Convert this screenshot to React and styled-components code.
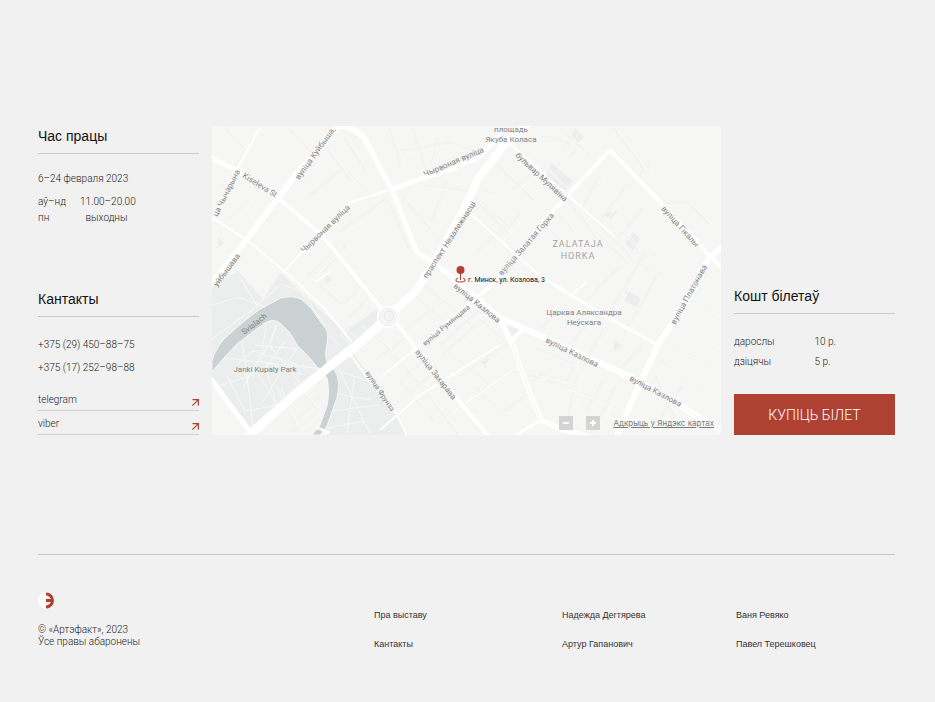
import React from "react";
import styled, { createGlobalStyle } from "styled-components";

const Global = createGlobalStyle`
  * { box-sizing: border-box; }
  body { margin: 0; background: #f1f1f1; font-family: Roboto, "Noto Sans", sans-serif; font-size: 10px; font-weight: 300; color: #222; }
`;

const grotesk = '"Liberation Sans", Arial, sans-serif';
const red = "#ae4132";

const Page = styled.div`
  padding: 126px 40px 48px 38px;
`;
const Main = styled.main`
  display: grid;
  grid-template-columns: 161px minmax(0, 1fr) 161px;
  gap: 13px;
`;
const Column = styled.div`
  display: flex;
  flex-direction: column;
  justify-content: ${(p) => p.$justify};
`;
const Section = styled.section`
  display: flex;
  flex-direction: column;
  line-height: 16px;
`;
const Heading = styled.h2`
  margin: 0 0 17px;
  padding-bottom: 7px;
  border-bottom: 1px solid #c9c9c9;
  font: 400 14px/20px ${grotesk};
  color: #111;
`;
const Facts = styled.dl`
  display: grid;
  grid-template-columns: ${(p) => p.$columns};
  row-gap: ${(p) => p.$gap};
  margin: ${(p) => p.$margin};
`;
const Term = styled.dt``;
const Value = styled.dd`
  margin: 0;
  text-align: ${(p) => p.$align || "left"};
  white-space: nowrap;
`;
const Phones = styled.div`
  display: flex;
  flex-direction: column;
  gap: 7px;
  margin: 3px 0 11px;
`;
const Plain = styled.a`
  color: inherit;
  text-decoration: none;
`;
const Messenger = styled(Plain)`
  display: flex;
  justify-content: space-between;
  padding: 5px 0 2px;
  border-bottom: 1px solid #d0d0d0;
`;
const Arrow = styled.svg`
  width: 7px;
  height: 7px;
  margin-top: 7px;
`;
const Buy = styled.button`
  height: 41px;
  border: 0;
  padding: 0;
  background: ${red};
  color: #fff;
  font: 300 14px/20px Roboto, sans-serif;
  cursor: pointer;
`;
const MapFrame = styled.section`
  position: relative;
  overflow: hidden;
  background: #f6f6f5;
`;
const Drawing = styled.svg`
  display: block;
  width: 100%;
`;
const Controls = styled.div`
  position: absolute;
  right: 7px;
  bottom: 5px;
  display: flex;
  align-items: center;
`;
const Zoom = styled.button`
  display: grid;
  place-items: center;
  width: 14px;
  height: 14px;
  margin-right: 13px;
  padding: 0;
  border: 0;
  background: #d4d4d4;
`;
const MapLink = styled.a`
  font: 400 8px/14px Inter, sans-serif;
  color: #7c7c7c;
`;
const Footer = styled.footer`
  display: grid;
  grid-template-columns: 336fr 188fr 174fr 159fr;
  margin-top: 119px;
  padding-top: 37px;
  border-top: 1px solid #c6c6c6;
  line-height: 12px;
`;
const Logo = styled.svg`
  display: block;
  width: 17px;
  height: 17px;
  margin-bottom: 15px;
`;
const Links = styled.nav`
  display: flex;
  flex-direction: column;
  align-items: flex-start;
  gap: 17px;
  padding-top: 17px;
  font: 400 9px/12px ${grotesk};
  color: #333;
`;

const river =
  "M212 372 L212 360 Q217 346 225 338 L243 322 L260 309 L281 298 Q292 295 301 299 L311 308 Q319 320 326 329 Q329 334 327 345 Q324 357 328 365 Q336 370 338 378 Q340 387 337 398 Q333 408 330 418 L326 428 L320 435 L312 435 L320 425 L327 406 Q330 390 327 378 L319 369 L307 355 L297 345 L290 333 L280 323 Q273 318 265 323 L250 334 L237 344 L223 359 Z";

const roads = [
  ["M205 292 L237 252 L278 198 L297 173 L340 124", 6],
  ["M205 155 L240 172 L278 198", 5],
  ["M278 198 L322 235 L360 282 L388 317", 4],
  ["M335 125 L350 127 L363 136 L376 161 L392 191 L416 252 L450 275", 6],
  ["M392 189 L423 178 L450 170 L478 158 L502 134", 5],
  ["M392 189 L352 202 L320 232 L284 272", 2],
  ["M530 122 L504 145 L478 179 L462 213 L438 256 L416 291 L388 317", 8],
  ["M388 317 L356 346 L330 366 L292 397 L246 438", 9],
  ["M450 276 L500 318 L550 340 L637 380 L725 433", 6],
  ["M499 318 L513 345 L526 383 L541 420 L562 430 L590 437", 5],
  ["M541 420 L513 437", 3],
  ["M522 331 L512 340", 4],
  ["M722 247 L709 258 L689 298 L658 345 L636 392 L616 438", 6],
  ["M610 150 L661 203 L711 257 L722 268", 4],
  ["M610 150 L552 212 L496 281 L472 302", 4],
  ["M506 140 L566 194 L615 237", 2],
  ["M472 215 L540 276", 2],
  ["M540 276 L612 320 L658 345", 3],
  ["M474 300 L420 345 L380 378", 2],
  ["M395 321 L414 346 L460 402 L489 437", 4],
  ["M347 350 L372 384 L396 413 L408 438", 2],
  ["M205 371 L251 433", 5],
  ["M260 128 L237 169 L208 228", 2],
  ["M210 216 L248 241 L284 271 L300 285 L324 308 L352 342", 2],
  ["M380 430 L420 395 L500 345", 2],
  ["M453 412 L520 365", 1],
  ["M573 294 L587 281", 2],
  ["M315 282 L330 272", 2],
];

const lanes = [
  "M212 339 L252 310 L281 284 L300 291 L326 326", "M212 305 L239 297 L265 307", "M239 276 L257 305",
  "M224 358 L325 369", "M242 340 L254 431", "M266 323 L263 350 L242 390", "M276 328 L260 361 L302 374",
  "M227 375 L245 411 L278 405", "M219 386 L258 373 L277 405", "M255 345 L297 349 L285 365 L263 402",
  "M276 325 L270 346 L300 383", "M287 339 L266 367 L276 404", "M237 365 L253 351 L298 365",
  "M342 351 L350 346 M336 370 L382 386", "M338 394 L371 400 M333 411 L378 405 M347 433 L354 379",
  "M340 371 L370 434 M327 428 L365 421", "M342 348 L331 337 M350 345 L341 335 L375 309 M359 340 L348 330",
];

const alleys = [
  "M225 128 L247 150 L231 171 M221 184 L249 198 L229 219 M254 187 L278 205",
  "M290 130 L316 157 L301 176 M309 196 L343 167 L371 194 M301 216 L346 245 L323 271",
  "M344 138 L366 171 M324 145 L351 181 M339 232 L387 198 L409 249",
  "M389 128 L401 166 M413 128 L426 170 M438 137 L431 163 M400 151 L448 142 L486 156",
  "M423 185 L462 190 M402 196 L435 234 M447 180 L432 220 M456 224 L436 250",
  "M485 190 L530 213 L560 238 M499 166 L535 201 M476 196 L507 224 L478 250",
  "M509 233 L466 190 M520 214 L493 245 M530 174 L512 190 M543 165 L563 185",
  "M560 128 L589 154 M542 135 L577 147 L567 160 M574 129 L564 148",
  "M601 174 L582 208 L620 244 M627 185 L602 217 M641 210 L617 239 L630 256",
  "M613 128 L644 169 L636 181 M650 159 L645 178 M660 203 L688 202 L709 223",
  "M568 200 L597 239 M558 214 L573 230 M580 216 L627 262 M642 208 L624 232 L638 250",
  "M619 267 L586 301 M644 254 L608 315 M660 271 L624 333 M677 286 L645 268 M690 277 L652 253",
  "M567 305 L539 329 M590 320 L566 349 M604 328 L583 366 M641 346 L618 371 M661 360 L705 392",
  "M673 322 L716 346 M690 300 L718 314 M671 346 L711 365 M655 375 L680 430 M682 386 L654 427",
  "M535 348 L574 365 L567 381 L538 373 M552 369 L525 384 M578 369 L564 434 M603 380 L586 411",
  "M550 380 L621 410 M615 387 L591 433 M511 371 L540 378 M547 381 L581 393",
  "M410 290 L451 326 M420 280 L475 328 M434 307 L400 334 M477 312 L440 345 L491 384",
  "M443 354 L482 320 L507 343 M468 370 L507 344 M425 359 L400 381 L435 422",
  "M385 345 L418 382 M376 360 L407 336 M391 408 L430 375 M427 394 L458 434 M475 387 L503 412 L530 392",
  "M367 280 L342 305 L319 283 M306 278 L337 247 M348 319 L374 292 M362 326 L387 346",
  "M276 385 L294 423 L320 396 M294 383 L310 401 Q322 409 309 417 L292 432",
];

const labels = [
  ["вуліца Куйбыша,", 299, 180, -54, 8],
  ["Kiseleva St", 242, 177, 32, 8],
  ["ца Чычэрына", 217, 217, -63, 8],
  ["уйбышава", 217, 287, -53, 8],
  ["Чырвоная вуліца", 304, 253, -44, 8],
  ["Чырвоная вуліца", 425, 177, -23, 8],
  ["праспект Незалежнасці", 427, 279, -57, 8],
  ["бульвар Мулявіна", 515, 156, 43, 8],
  ["вуліца Залатая Горка", 502, 276, -49, 8],
  ["вуліца Гікалы", 661, 209, 48, 8],
  ["вуліца Платонава", 675, 325, -61, 8],
  ["вуліца Казлова", 453, 287, 39, 8],
  ["вуліца Казлова", 545, 342, 26, 8],
  ["вуліца Казлова", 629, 380, 28, 8],
  ["вуліца Румянцава", 425, 346, -40, 7],
  ["вуліца Захарава", 415, 352, 52, 8],
  ["вуліца Фрунзэ", 365, 373, 56, 7],
  ["Svislach", 244, 335, -37, 8],
];

const places = [
  ["площадь", 511, 132], ["Якуба Коласа", 511, 142], ["Janki Kupaly Park", 265, 372],
  ["Царква Аляксандра", 584, 315], ["Неўскага", 584, 325],
];

function CityMap() {
  return (
    <Drawing viewBox="212 126 509 309" role="img" aria-label="г. Минск, ул. Козлова, 3">
      <g fill="#ebeeed">
        <path d="M212 286 L238 271 L263 299 L281 273 L300 291 L338 326 L350 344 L319 370 L249 430 L212 379Z" />
        <path d="M329 368 L351 350 L398 416 L408 435 L326 435Z M339 334 L376 310 L383 322 L352 347Z" />
        <path d="M575 128 L584 137 L577 143 L568 136Z M551 163 L573 181 L565 191 L546 177Z M633 232 L640 239 L633 250 L625 244Z M603 214 L618 211 L610 220Z M626 290 L641 298 L637 307 L625 301Z M614 340 L622 345 L614 352Z M481 362 L489 358 L486 369Z M218 238 L224 243 L219 247Z M326 274 L331 280 L325 284Z M508 324 L520 329 L511 336Z" />
      </g>
      <path d="M249 430 L319 370 Q329 378 327 406 L312 435 H252Z" fill="#f5f5f4" />
      <g fill="none" stroke="#f2f3f2" strokeWidth="2">
        {alleys.map((d) => <path key={d} d={d} />)}
      </g>
      <g fill="none" stroke="#fafafa" strokeWidth="1">
        {alleys.map((d) => <path key={d} d={d} transform="translate(5 3)" />)}
      </g>
      <path d={river} fill="#cbd2d4" stroke="#f8f9f9" strokeWidth="1" />
      <g fill="none" stroke="#f8f9f9" strokeWidth="1">
        {lanes.map((d) => <path key={d} d={d} />)}
      </g>
      <g fill="none" stroke="#fff" strokeLinejoin="round">
        {roads.map(([d, w]) => <path key={d} d={d} strokeWidth={w} />)}
      </g>
      <g fill="none" stroke="#f4f5f5">
        <path d="M338 129 L361 139 L390 192 L414 253 L448 277 M512 345 L540 420 M630 377 L720 430" />
      </g>
      <circle cx="388" cy="317" r="11" fill="#fff" />
      <circle cx="388" cy="317" r="9" fill="#f6f6f6" stroke="#eef0f0" />
      <circle cx="389" cy="316" r="5" fill="#f4f4f4" stroke="#e6e9e9" />
      <path d="M316 427 L329 433" stroke="#fff" strokeWidth="3" />
      <g fontFamily="Roboto, sans-serif" fontWeight="400" fill="#818181">
        {labels.map(([text, x, y, angle, size]) => (
          <text key={text + x} x={x} y={y} fontSize={size} transform={`rotate(${angle} ${x} ${y})`}>{text}</text>
        ))}
        {places.map(([text, x, y]) => (
          <text key={text} x={x} y={y} fontSize="8" textAnchor="middle">{text}</text>
        ))}
      </g>
      <g fontFamily="Roboto, sans-serif" fontSize="9" fontWeight="400" fill="#a4a4a4" letterSpacing="1" textAnchor="middle">
        <text x="578" y="247">ZALATAJA</text>
        <text x="578" y="259">HORKA</text>
      </g>
      <path d="M458 278 Q455 279 456 281 Q457 282 460 282 Q464 282 465 281 Q466 279 463 278" fill="none" stroke={red} strokeWidth="1" />
      <path d="M460.5 272 V280" stroke={red} strokeWidth="1" />
      <circle cx="460.5" cy="270" r="4" fill={red} />
      <text x="468" y="282" fontFamily="Roboto, sans-serif" fontSize="7" fontWeight="400" fill="#111">г. Минск, ул. Козлова, 3</text>
    </Drawing>
  );
}

const DiagonalArrow = () => (
  <Arrow viewBox="0 0 7 7" fill="none" stroke={red} strokeWidth="1.2" aria-hidden="true">
    <path d="M0.5 0.6 H6.4 V6.5 M6.4 0.6 L0.4 6.6" />
  </Arrow>
);

const ZoomIcon = ({ d }) => (
  <svg width="8" height="8" viewBox="0 0 8 8" stroke="#fff" strokeWidth="2" aria-hidden="true"><path d={d} /></svg>
);

export default function App() {
  return (
    <Page>
      <Global />
      <Main>
        <Column $justify="space-between">
          <Section>
            <Heading>Час працы</Heading>
            <time>6–24 февраля 2023</time>
            <Facts $columns="42px 53px" $gap="0" $margin="7px 0 0">
              <Term>аў–нд</Term><Value $align="center">11.00–20.00</Value>
              <Term>пн</Term><Value $align="center">выходны</Value>
            </Facts>
          </Section>
          <Section>
            <Heading>Кантакты</Heading>
            <Phones>
              <Plain href="tel:+375294508875">+375 (29) 450–88–75</Plain>
              <Plain href="tel:+375172529888">+375 (17) 252–98–88</Plain>
            </Phones>
            <Messenger href="#telegram">telegram<DiagonalArrow /></Messenger>
            <Messenger href="#viber">viber<DiagonalArrow /></Messenger>
          </Section>
        </Column>
        <MapFrame>
          <CityMap />
          <Controls>
            <Zoom type="button" aria-label="Паменшыць"><ZoomIcon d="M1 4H7" /></Zoom>
            <Zoom type="button" aria-label="Павялічыць"><ZoomIcon d="M1 4H7M4 1V7" /></Zoom>
            <MapLink href="#map">Адкрыць у Яндэкс картах</MapLink>
          </Controls>
        </MapFrame>
        <Column $justify="flex-end">
          <Section>
            <Heading>Кошт білетаў</Heading>
            <Facts $columns="1fr 1fr" $gap="4px" $margin="3px 0 24px">
              <Term>дарослы</Term><Value>10 р.</Value>
              <Term>дзіцячы</Term><Value>5 р.</Value>
            </Facts>
            <Buy type="button">КУПІЦЬ БІЛЕТ</Buy>
          </Section>
        </Column>
      </Main>
      <Footer>
        <div>
          <Logo viewBox="0 0 17 17" aria-hidden="true">
            <path d="M8.5 0 A8.5 8.5 0 0 0 8.5 17Z" fill="#fff" />
            <path d="M8 2 A6.5 6.5 0 0 1 8 15 M8 8.5 H15" fill="none" stroke={red} strokeWidth="3" />
          </Logo>
          © «Артэфакт», 2023<br />Ўсе правы абаронены
        </div>
        <Links><Plain href="#about">Пра выставу</Plain><Plain href="#contacts">Кантакты</Plain></Links>
        <Links><Plain href="#nadezhda">Надежда Дегтярева</Plain><Plain href="#artur">Артур Гапанович</Plain></Links>
        <Links><Plain href="#vanya">Ваня Ревяко</Plain><Plain href="#pavel">Павел Терешковец</Plain></Links>
      </Footer>
    </Page>
  );
}
